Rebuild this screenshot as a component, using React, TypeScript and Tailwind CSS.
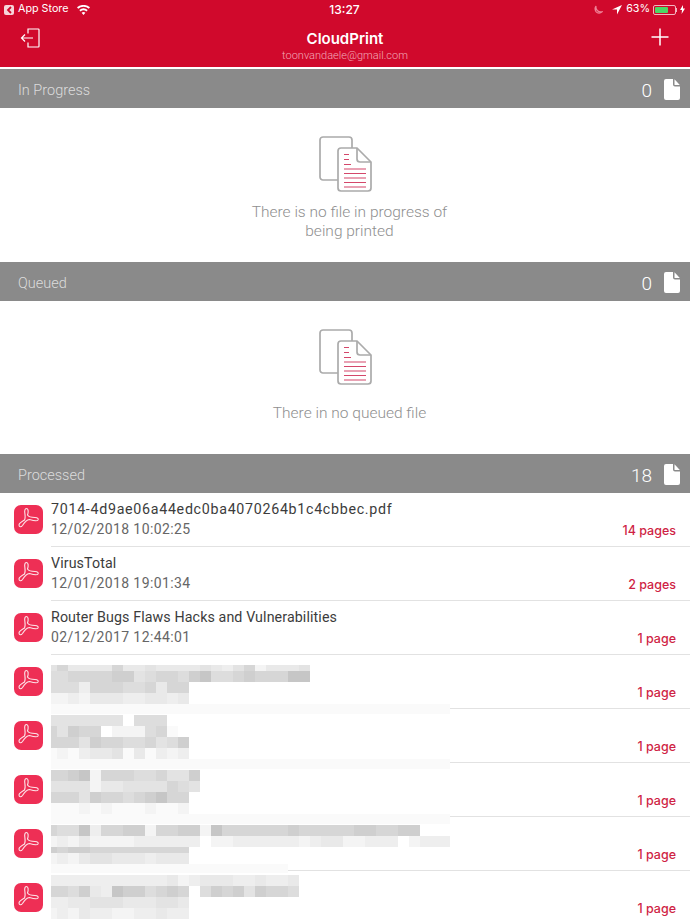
import type { ReactNode } from 'react'

const SHADES: Record<string, string> = {
  '0': '#ffffff',
  '1': '#fafafa',
  '2': '#f4f4f4',
  '3': '#eeeeee',
  '4': '#e9e9e9',
  '5': '#e3e3e3',
  '6': '#dddddd',
  '7': '#d6d6d6',
  '8': '#cfcfcf',
  '9': '#c6c6c6',
}

type Strip = { h: number; cells: string }
type Row = { title?: string; titleClass?: string; date?: string; pages: string; top?: number; strips?: Strip[] }

const FAINT = '1111111111111111111111111111111111111'

const ROWS: Row[] = [
  {
    title: '7014-4d9ae06a44edc0ba4070264b1c4cbbec.pdf',
    titleClass: 'tracking-[0.7px]',
    date: '12/02/2018 10:02:25',
    pages: '14 pages',
  },
  { title: 'VirusTotal', titleClass: 'tracking-[0.1px]', date: '12/01/2018 19:01:34', pages: '2 pages' },
  {
    title: 'Router Bugs Flaws Hacks and Vulnerabilities',
    titleClass: 'tracking-[0.1px]',
    date: '02/12/2017 12:44:01',
    pages: '1 page',
  },
  {
    pages: '1 page',
    top: 10,
    strips: [
      { h: 6, cells: '574444744544445435724445' },
      { h: 11, cells: '667777885677689667877799' },
      { h: 11, cells: '6663777667477' },
      { h: 11, cells: '2232444334434' },
      { h: 10, cells: FAINT },
    ],
  },
  {
    pages: '1 page',
    top: 6,
    strips: [
      { h: 11, cells: '55555550666' },
      { h: 11, cells: '758770222671' },
      { h: 11, cells: '7775877667568' },
      { h: 11, cells: '1213445141323' },
      { h: 10, cells: FAINT },
    ],
  },
  {
    pages: '1 page',
    top: 7,
    strips: [
      { h: 11, cells: '77892777667558' },
      { h: 11, cells: '55552445555765' },
      { h: 11, cells: '7775877678977' },
      { h: 11, cells: '1112121112112' },
      { h: 10, cells: FAINT },
    ],
  },
  {
    pages: '1 page',
    top: 8,
    strips: [
      { h: 11, cells: '7669377882778829777777877777887788' },
      { h: 11, cells: '2324222233333302233333323442233302333' },
      { h: 6, cells: '8788777777777' },
      { h: 11, cells: '2324554443444' },
      { h: 9, cells: '1111111111111111111111' },
    ],
  },
  {
    pages: '1 page',
    top: 4,
    strips: [
      { h: 11, cells: '33333333333423444334334' },
      { h: 11, cells: '77684398867870687858776' },
      { h: 11, cells: '3344555444554' },
      { h: 11, cells: '2324332233433' },
    ],
  },
]

function ExitIcon() {
  return (
    <svg width="20" height="20" viewBox="0 0 20 20" fill="none" stroke="#fff" strokeWidth="1.2">
      <path d="M8 5.500V1h10.300a.7.7 0 0 1 .7.7v16.600a.7.7 0 0 1-.7.7H8v-4.500" />
      <path d="M13 10H1.500M5 6.500 1.500 10 5 13.500" />
    </svg>
  )
}

function FileIcon() {
  return (
    <svg className="mt-[2px]" width="16" height="21" viewBox="0 0 16 21" fill="#fff">
      <path d="M2 0h7v5.500a2 2 0 0 0 2 2h5V19a2 2 0 0 1-2 2H2a2 2 0 0 1-2-2V2a2 2 0 0 1 2-2z" />
      <path d="M10.500 .3 15.800 6h-4.800a.5.5 0 0 1-.5-.5z" />
    </svg>
  )
}

function EmptyIcon() {
  return (
    <svg width="53" height="56" viewBox="0 0 53 56" fill="none">
      <path
        d="M19 44H4a3 3 0 0 1-3-3V4a3 3 0 0 1 3-3h26a3 3 0 0 1 3 3v8"
        stroke="#ababab"
        strokeWidth="1.7"
      />
      <path
        d="M22 12h16l14 14v26a3 3 0 0 1-3 3H22a3 3 0 0 1-3-3V15a3 3 0 0 1 3-3z"
        fill="#fff"
        stroke="#ababab"
        strokeWidth="1.7"
      />
      <path d="M38 12v11a3 3 0 0 0 3 3h11" stroke="#ababab" strokeWidth="1.7" />
      <path
        d="M25 18.500h5M25 23.500h5M25 28.500h7M25 33h22M25 37.500h22M25 42h22M25 46.500h22M25 51h22"
        stroke="#d4476a"
        strokeWidth="1.2"
      />
    </svg>
  )
}

function PdfIcon() {
  return (
    <div className="w-[29px] h-[29px] mb-[1px] shrink-0 rounded-[7px] bg-[#ee2f55]">
      <svg width="29" height="29" viewBox="0 0 29 29" fill="none" stroke="#fde4e9" strokeWidth="1.100">
        <path d="M12.500 3.500C14.500 3.500 14.500 7 13.500 10C15 12.500 18 12.500 21 12.500C24 12.500 24.500 14 24 15C23 16.500 19 15.500 15.500 14.500C12 15 10 18 8.500 20.500C7 22.500 5 22 5 20C5 18 8 16.500 10.500 15C12 12.500 10.500 8 10.700 6C10.800 4.500 11.500 3.500 12.500 3.500Z" />
      </svg>
    </div>
  )
}

function SectionHeader({ label, count }: { label: string; count: number }) {
  return (
    <div className="h-[39px] bg-[#8a8a8a] flex items-center pl-[18px] pr-[10px]">
      <span className="flex-1 pt-[4px] font-['Roboto',sans-serif] text-[14.500px] font-light text-[#dcdcdc]">{label}</span>
      <span className="pt-[5px] font-['Roboto',sans-serif] text-[19px] font-light text-white mr-[12px]">{count}</span>
      <FileIcon />
    </div>
  )
}

function EmptyBody({ h, gap, children }: { h: string; gap: string; children: ReactNode }) {
  return (
    <div className={`${h} bg-white flex flex-col items-center pt-[28px]`}>
      <EmptyIcon />
      <p
        className={`${gap} pl-[9px] text-center font-['Roboto',sans-serif] text-[15.500px] leading-[19px] font-light text-[#8f8f8f]`}
      >
        {children}
      </p>
    </div>
  )
}

function Blurred({ top, strips }: { top: number; strips: Strip[] }) {
  return (
    <div className="absolute left-0 z-10 w-[399px] overflow-hidden" style={{ top }}>
      {strips.map((s, i) => (
        <div key={i} className="flex" style={{ height: s.h }}>
          {s.cells.split('').map((c, j) => (
            <div key={j} className="w-[11px] first:w-[6px] shrink-0" style={{ backgroundColor: SHADES[c] }} />
          ))}
        </div>
      ))}
    </div>
  )
}

function FileRow({ row }: { row: Row }) {
  return (
    <div className="h-[54px] flex items-center pl-[14px]">
      <PdfIcon />
      <div className="relative flex-1 h-full ml-[8px] border-b border-[#e2e2e2] pr-[14px]">
        {row.title && (
          <div
            className={`${row.titleClass} pt-[7px] font-['Roboto',sans-serif] text-[14.250px] leading-[18px] text-[#3c3c3c]`}
          >
            {row.title}
          </div>
        )}
        {row.date && (
          <div className="mt-[2px] font-['Roboto',sans-serif] text-[14px] leading-[18px] tracking-[0.4px] text-[#666666]">
            {row.date}
          </div>
        )}
        {row.strips && <Blurred top={row.top ?? 0} strips={row.strips} />}
        <div className="absolute right-[14px] top-[30px] text-[12.500px] leading-[16px] font-medium text-[#cf1f45]">
          {row.pages}
        </div>
      </div>
    </div>
  )
}

export default function App() {
  return (
    <div className="w-[690px] h-[920px] overflow-hidden bg-white font-['Inter',sans-serif]">
      <div className="bg-[#d0092c] text-white">
        <div className="h-[19px] flex items-center justify-between pl-[4px] pr-[5px] text-[10.750px]">
          <div className="flex-1 flex items-center">
            <span className="w-[10px] h-[10px] rounded-[2px] bg-[#f6d4da] flex items-center justify-center mr-[4px]">
              <svg width="6" height="8" viewBox="0 0 6 8" fill="none" stroke="#d0092c" strokeWidth="1.800">
                <path d="M5 1 2 4l3 3" />
              </svg>
            </span>
            <span>App Store</span>
            <svg className="ml-[8px]" width="13" height="10" viewBox="0 0 13 10" fill="#fff">
              <path d="M6.500 10 4.600 7.700a3 3 0 0 1 3.800 0zM3.500 6.500 2.300 5a6.500 6.500 0 0 1 8.400 0L9.500 6.500a4.700 4.700 0 0 0-6 0zM1.200 3.700 0 2.300a10 10 0 0 1 13 0l-1.200 1.400a8.300 8.300 0 0 0-10.600 0z" />
            </svg>
          </div>
          <span className="text-[12px] font-medium">13:27</span>
          <div className="flex-1 flex items-center justify-end">
            <svg width="9" height="9" viewBox="0 0 9 9" fill="none" stroke="#ee8296" strokeWidth="1.200">
              <path d="M2 1c-.6 3.500 2 6.500 6 5.800-1.500 1.700-4.500 1.800-6-.2C1 5.200 1 2.500 2 1z" />
            </svg>
            <svg className="ml-[9px]" width="10" height="10" viewBox="0 0 10 10" fill="#fff">
              <path d="M10 0 0 4.500h5V9.500z" />
            </svg>
            <span className="ml-[4px]">63%</span>
            <span className="ml-[3px] w-[23px] h-[10px] border border-[#f3b4bf] rounded-[2px] p-[1px] flex bg-[#d0092c]">
              <span className="w-[13px] h-full bg-[#4cd964] rounded-[1px]" />
            </span>
            <span className="w-[1px] h-[4px] bg-[#f3b4bf]" />
            <svg className="ml-[3px]" width="5" height="9" viewBox="0 0 5 9" fill="#fff">
              <path d="M3 0 0 5h2l-.4 4L5 3.600H3z" />
            </svg>
          </div>
        </div>
        <div className="h-[48px] flex items-start pl-[20px] pr-[20px]">
          <div className="w-[60px] pt-[9px]">
            <ExitIcon />
          </div>
          <div className="flex-1 text-center pt-[11px]">
            <div className="text-[15px] leading-[18px] font-semibold">CloudPrint</div>
            <div className="font-['Roboto',sans-serif] text-[11px] leading-[14px] font-light text-[#f3a9b8] mt-[1px]">
              toonvandaele@gmail.com
            </div>
          </div>
          <div className="w-[60px] pt-[8px] flex justify-end">
            <svg width="20" height="20" viewBox="0 0 20 20" stroke="#fff" strokeWidth="1.500">
              <path d="M10 1.500v17M1.500 10h17" />
            </svg>
          </div>
        </div>
      </div>
      <div className="h-[2px] bg-white" />

      <SectionHeader label="In Progress" count={0} />
      <EmptyBody h="h-[154px]" gap="mt-[11px]">
        There is no file in progress of
        <br />
        being printed
      </EmptyBody>

      <SectionHeader label="Queued" count={0} />
      <EmptyBody h="h-[153px]" gap="mt-[19px]">
        There in no queued file
      </EmptyBody>

      <SectionHeader label="Processed" count={18} />
      {ROWS.map((row, i) => (
        <FileRow key={i} row={row} />
      ))}
    </div>
  )
}
